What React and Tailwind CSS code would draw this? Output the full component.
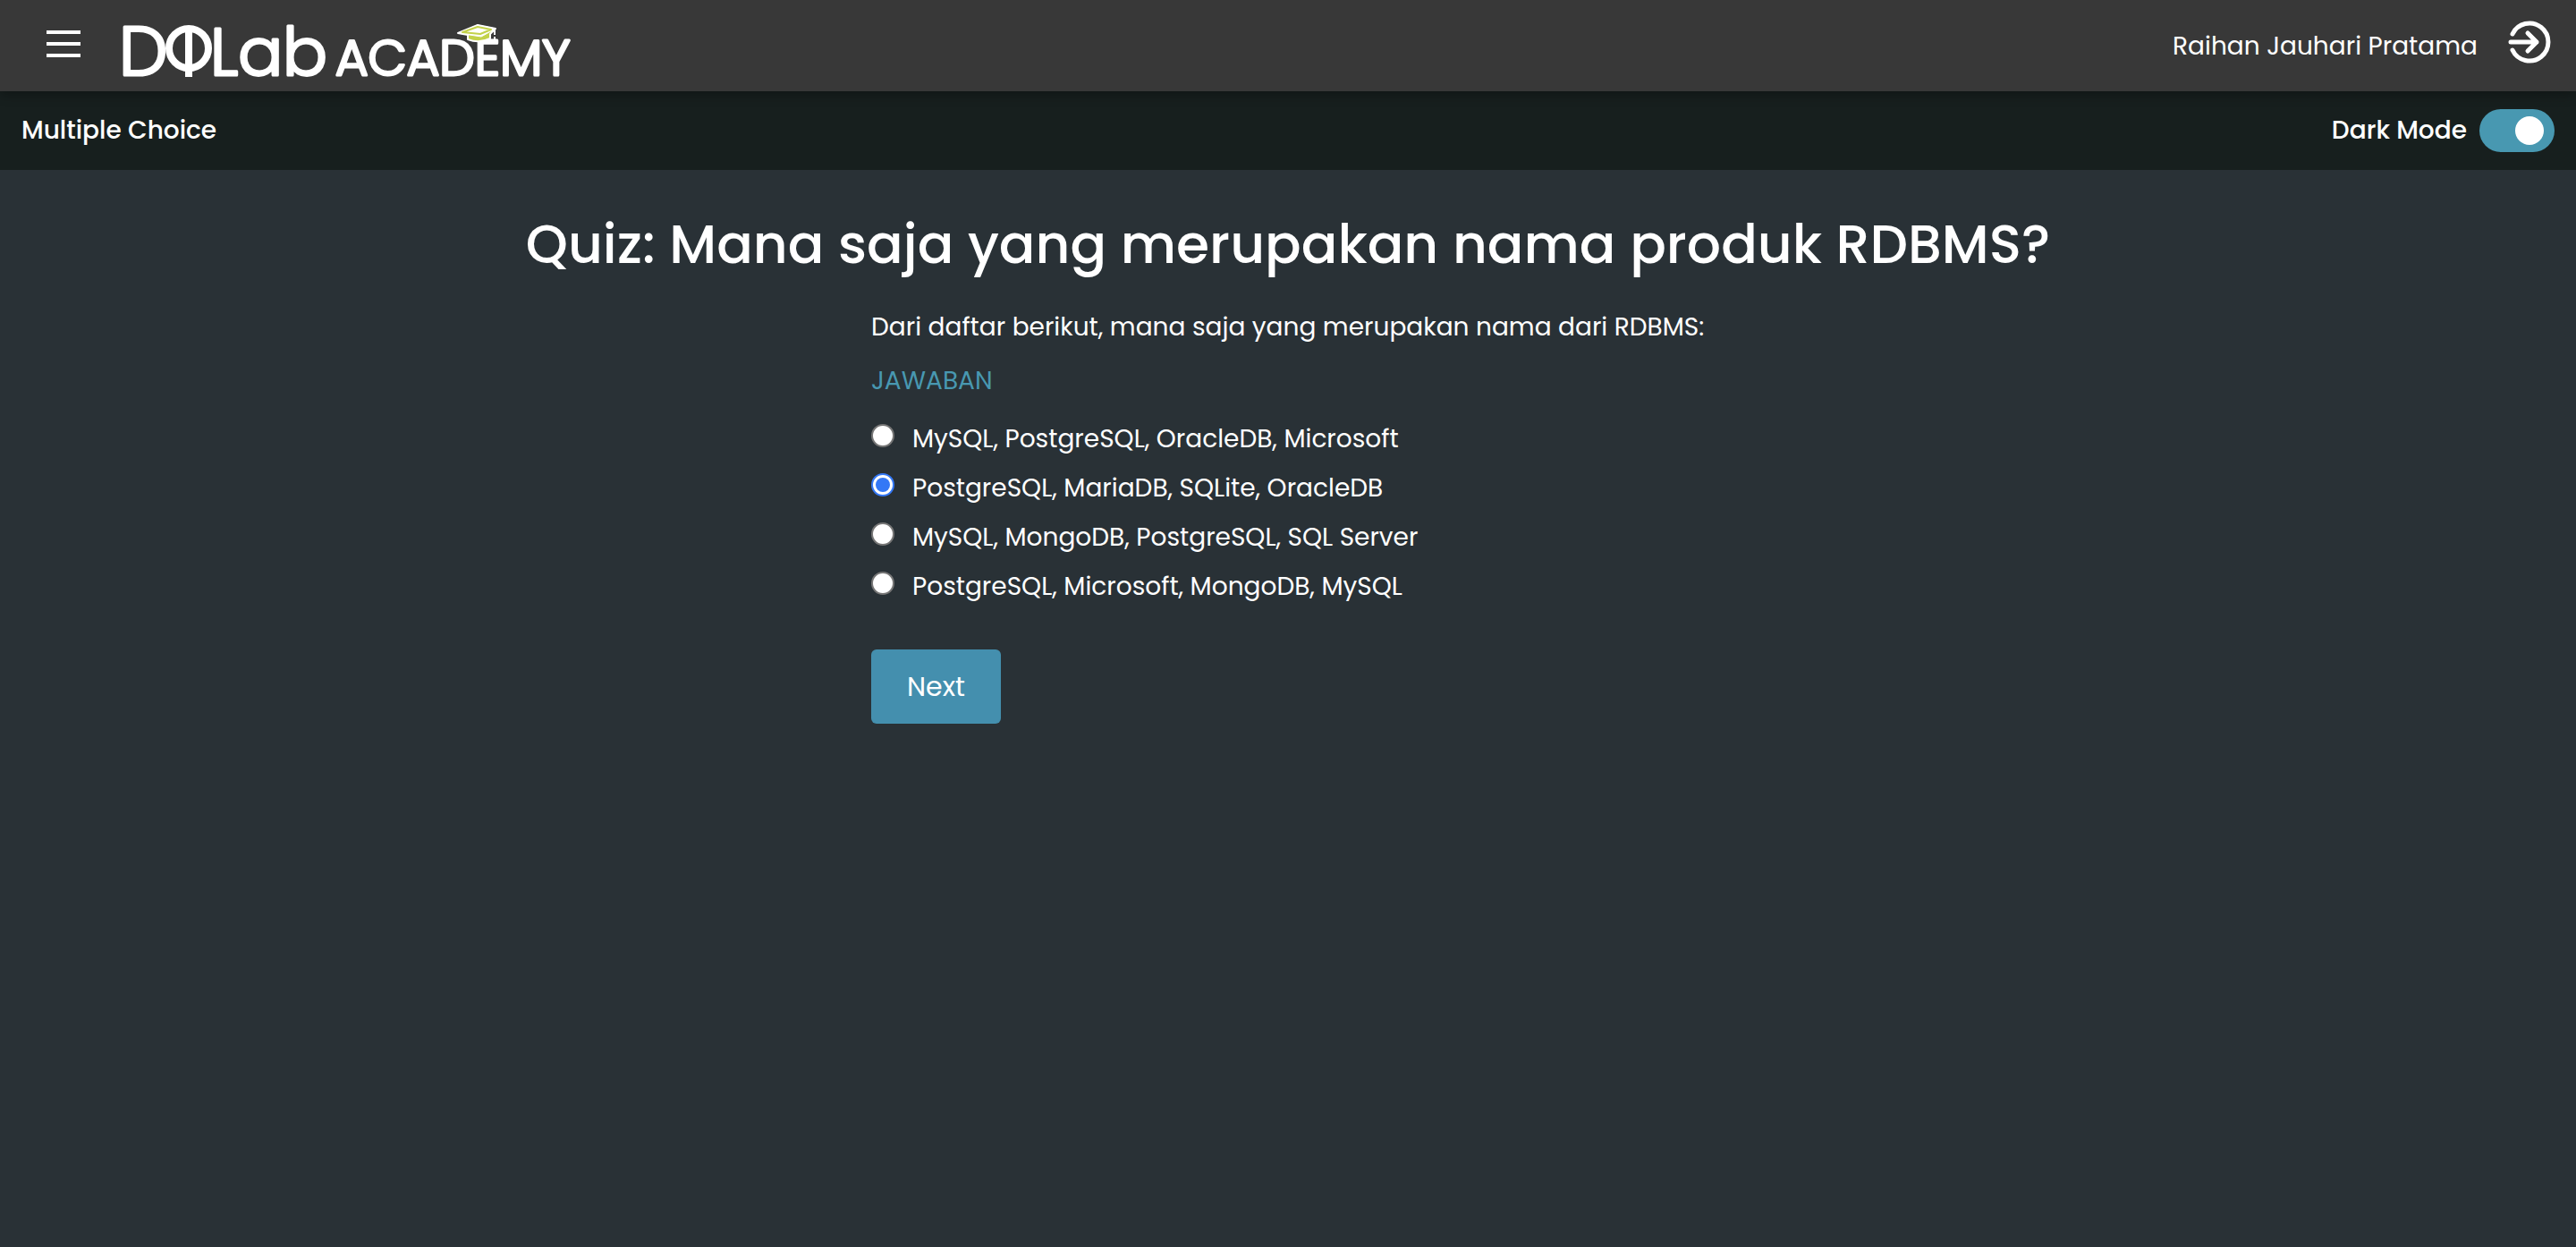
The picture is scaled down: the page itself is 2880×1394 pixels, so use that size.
import { useState } from "react";

const answers = [
  "MySQL, PostgreSQL, OracleDB, Microsoft",
  "PostgreSQL, MariaDB, SQLite, OracleDB",
  "MySQL, MongoDB, PostgreSQL, SQL Server",
  "PostgreSQL, Microsoft, MongoDB, MySQL",
];

function Logo() {
  return (
    <svg
      viewBox="0 0 504 102"
      className="h-[102px] w-[504px] overflow-visible"
      fill="white"
      stroke="white"
      strokeLinejoin="round"
      fontFamily="Poppins, sans-serif"
      fontWeight="300"
      role="img"
      aria-label="DQLab Academy"
    >
      <text x="-5" y="84" fontSize="77" strokeWidth="3">D</text>
      <circle cx="73" cy="54" r="22" fill="none" strokeWidth="8" />
      <path d="M73 30V86" strokeWidth="8" />
      <text x="97" y="84" fontSize="74" strokeWidth="3">Lab</text>
      <text x="237" y="84" fontSize="56" strokeWidth="3">ACADEMY</text>
      <path
        d="M374 37L396 28L416 32L410 38V43Q398 49 385 44V39Z"
        fill="#c3d24a"
        strokeWidth="2"
      />
      <path d="M374 37L396 28L416 32L400 41Z" strokeWidth="1" />
      <path d="M379 36L396 30L411 33L399 38Z" fill="none" stroke="#c3d24a" strokeWidth="2" />
      <path d="M415 33V39M415 41V44" fill="none" strokeWidth="2" />
    </svg>
  );
}

function ExitIcon() {
  return (
    <svg
      viewBox="0 0 48 48"
      className="size-12"
      fill="none"
      stroke="white"
      strokeWidth="5"
      strokeLinecap="round"
      strokeLinejoin="round"
      aria-hidden="true"
    >
      <path d="M5 15A21 21 0 1 1 5 33" />
      <path d="M3 24H32M22 14L32 24L22 34" />
    </svg>
  );
}

export default function App() {
  const [selected, setSelected] = useState(1);
  const [dark, setDark] = useState(true);

  return (
    <div className="min-h-screen bg-[#293136] font-['Poppins',sans-serif] text-[28px] leading-10 text-white">
      <header className="relative flex h-[102px] items-center justify-between bg-[#383838] pr-7 pl-[52px] shadow-[0_4px_12px_rgba(0,0,0,0.3)]">
        <div className="flex items-center gap-12">
          <button type="button" aria-label="Menu" className="flex flex-col gap-[9px] pb-1">
            <span className="h-1 w-[38px] bg-white" />
            <span className="h-1 w-[38px] bg-white" />
            <span className="h-1 w-[38px] bg-white" />
          </button>
          <a href="#home">
            <Logo />
          </a>
        </div>
        <div className="flex items-center gap-[34px]">
          <span className="pt-0.5">Raihan Jauhari Pratama</span>
          <button type="button" aria-label="Log out" className="pb-2">
            <ExitIcon />
          </button>
        </div>
      </header>

      <div className="flex h-[88px] items-center justify-between bg-[#171f1e] px-6 font-medium">
        <span>Multiple Choice</span>
        <label className="flex cursor-pointer items-center gap-[14px]">
          Dark Mode
          <input
            type="checkbox"
            role="switch"
            checked={dark}
            onChange={() => setDark(!dark)}
            className="flex h-12 w-[84px] appearance-none items-center rounded-full bg-gray-500 px-3 before:size-8 before:rounded-full before:bg-white checked:justify-end checked:bg-[#4898b1]"
          />
        </label>
      </div>

      <main className="px-6 pt-[47px]">
        <h1 className="text-center text-[60px] leading-[72px] font-medium">
          Quiz: Mana saja yang merupakan nama produk RDBMS?
        </h1>
        <form className="mx-auto mt-[37px] w-full max-w-[932px]" onSubmit={(e) => e.preventDefault()}>
          <p className="mb-5">Dari daftar berikut, mana saja yang merupakan nama dari RDBMS:</p>
          <fieldset>
            <legend className="text-[#4898b1]">JAWABAN</legend>
            <div className="mt-[25px] flex flex-col gap-[15px]">
              {answers.map((answer, i) => (
                <label key={answer} className="flex cursor-pointer items-start gap-5">
                  <input
                    type="radio"
                    name="answer"
                    checked={selected === i}
                    onChange={() => setSelected(i)}
                    className="mt-[3px] flex size-[26px] shrink-0 appearance-none items-center justify-center rounded-full border-2 border-[#767676] bg-white before:size-4 before:rounded-full checked:border-[#3478f6] checked:before:bg-[#3478f6]"
                  />
                  {answer}
                </label>
              ))}
            </div>
          </fieldset>
          <button
            type="submit"
            className="mt-[50px] h-[83px] rounded-md bg-[#448fae] px-10 text-[30px]"
          >
            Next
          </button>
        </form>
      </main>
    </div>
  );
}
